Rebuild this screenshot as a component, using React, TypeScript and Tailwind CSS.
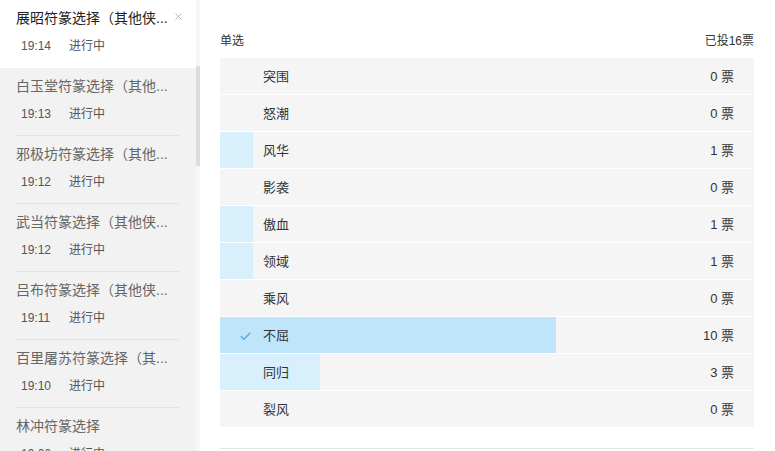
import { Check, X } from "lucide-react";

const sessions = [
  { title: "展昭符篆选择（其他侠...", time: "19:14" },
  { title: "白玉堂符篆选择（其他...", time: "19:13" },
  { title: "邪极坊符篆选择（其他...", time: "19:12" },
  { title: "武当符篆选择（其他侠...", time: "19:12" },
  { title: "吕布符篆选择（其他侠...", time: "19:11" },
  { title: "百里屠苏符篆选择（其...", time: "19:10" },
  { title: "林冲符篆选择", time: "19:06" },
];

const options = [
  { name: "突围", votes: 0 },
  { name: "怒潮", votes: 0 },
  { name: "风华", votes: 1 },
  { name: "影袭", votes: 0 },
  { name: "傲血", votes: 1 },
  { name: "领域", votes: 1 },
  { name: "乘风", votes: 0 },
  { name: "不屈", votes: 10, mine: true },
  { name: "同归", votes: 3 },
  { name: "裂风", votes: 0 },
];

const total = 16;

export default function App() {
  return (
    <div
      className="flex w-[775px] h-[451px] overflow-hidden bg-white text-[#333]"
      style={{ fontFamily: '"Liberation Sans", "Noto Sans CJK SC", sans-serif' }}
    >
      {/* sidebar */}
      <div className="relative flex w-[200px] shrink-0 bg-[#f2f2f2]">
        <div className="flex-1 flex flex-col overflow-hidden">
          {sessions.map((s, i) => (
            <div
              key={i}
              className={`relative shrink-0 h-[68px] px-4 pt-[7px] ${i === 0 ? "bg-white h-[66px]" : ""}`}
            >
              <div className={`text-sm leading-[22px] ${i === 0 ? "text-[#222]" : "text-[#666]"}`}>
                {s.title}
              </div>
              <div className="flex mt-[7px] text-xs leading-5 text-[#555]">
                <span className="w-[53px] pl-[5px]">{s.time}</span>
                <span>进行中</span>
              </div>
              {i === 0 && (
                <X className="absolute right-[12px] top-[11px] w-[11px] h-[11px] text-[#999]" strokeWidth={1.5} />
              )}
              {i > 0 && <div className="absolute left-4 right-[16px] bottom-0 h-px bg-[#e4e4e4]" />}
            </div>
          ))}
        </div>
        <div className="w-1 shrink-0 bg-[#f7f7f7] flex flex-col">
          <div className="h-[66px]" />
          <div className="h-[100px] bg-[#dcdcdc]" />
        </div>
      </div>

      {/* main */}
      <div className="flex-1 flex flex-col pl-5 pr-[21px] pt-[31px]">
        <div className="flex justify-between text-xs leading-5 text-[#333] mb-[7px]">
          <span>单选</span>
          <span>已投16票</span>
        </div>
        <div className="flex flex-col">
          {options.map((o) => (
            <div
              key={o.name}
              className="relative h-[37px] border-b border-white bg-[#f5f5f5] flex items-center pt-[2px] text-[13px]"
            >
              <div
                className={`absolute left-0 top-0 bottom-0 ${o.mine ? "bg-[#bee5fa]" : "bg-[#d8f0fc]"}`}
                style={{ width: `${(o.votes / total) * 100 + (o.mine ? 0.4 : 0)}%` }}
              />
              <div className="relative w-[43px] flex justify-center pl-[8px]">
                {o.mine && <Check className="w-[13px] h-[13px] text-[#55a9dd]" strokeWidth={2.5} />}
              </div>
              <span className="relative flex-1">{o.name}</span>
              <span className="relative pr-5">{o.votes} 票</span>
            </div>
          ))}
        </div>
        <div className="mt-[20px] h-px bg-[#e6e6e6]" />
      </div>
    </div>
  );
}
